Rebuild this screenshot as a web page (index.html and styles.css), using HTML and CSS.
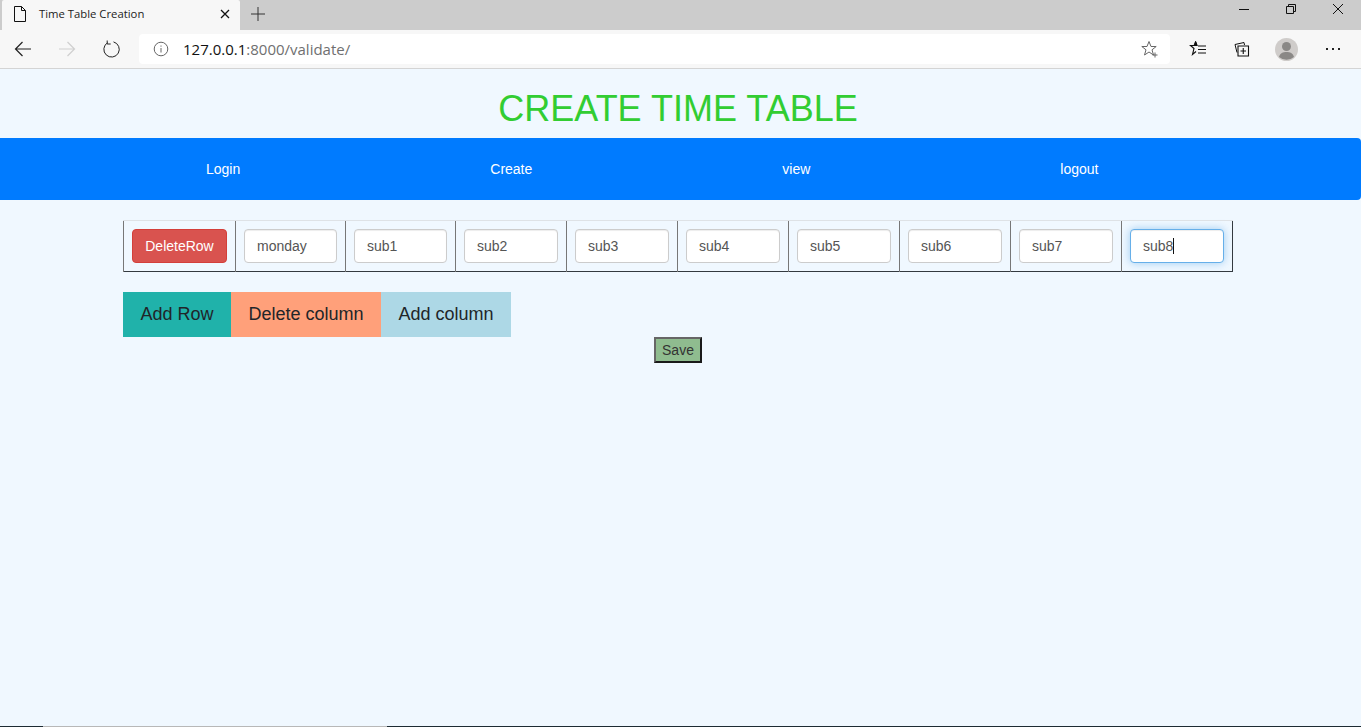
FILE: index.html
```html
<!DOCTYPE html>
<html>
<head>
<meta name="viewport" content="width=device-width, minimum-scale=1.0">
<title>Time Table Creation</title>
<link rel="stylesheet" href="styles.css">
</head>
<body>

<div class="tabstrip">
  <div class="tab">
    <svg class="tab-icon" width="16" height="18" viewBox="0 0 16 18"><path d="M2.500 1.500h7l4 4v11h-11zM9.500 1.500v4h4" fill="none" stroke="#111" stroke-width="1"/></svg>
    <span class="tab-title">Time Table Creation</span>
    <svg class="tab-close" width="10" height="10" viewBox="0 0 10 10"><path d="M1 1l8 8M9 1l-8 8" stroke="#111" stroke-width="1.300"/></svg>
  </div>
  <svg class="new-tab" width="14" height="14" viewBox="0 0 14 14"><path d="M7 0v14M0 7h14" stroke="#333" stroke-width="1"/></svg>
  <div class="window-controls">
    <svg width="12" height="12" viewBox="0 0 12 12"><path d="M1 6.500h10" stroke="#111" stroke-width="1"/></svg>
    <svg width="12" height="12" viewBox="0 0 12 12"><path d="M1.500 3.500h7v7h-7zM3.500 3.500v-2h7v7h-2" fill="none" stroke="#111" stroke-width="1"/></svg>
    <svg width="12" height="12" viewBox="0 0 12 12"><path d="M1 1l10 10M11 1l-10 10" stroke="#111" stroke-width="1"/></svg>
  </div>
</div>

<div class="toolbar">
  <svg class="tool back" width="18" height="16" viewBox="0 0 18 16"><path d="M17 8H1.500M8.500 1l-7 7 7 7" fill="none" stroke="#222" stroke-width="1.200"/></svg>
  <svg class="tool forward" width="18" height="16" viewBox="0 0 18 16"><path d="M1 8h15.500M9.500 1l7 7-7 7" fill="none" stroke="#cfcfcf" stroke-width="1.200"/></svg>
  <svg class="tool reload" width="18" height="18" viewBox="0 0 18 18"><path d="M5.500 2.800A7.700 7.700 0 1 0 11.500 1.900M5.200 0.500v3.500h3.500" fill="none" stroke="#222" stroke-width="1"/></svg>
  <div class="address">
    <svg class="info" width="16" height="16" viewBox="0 0 16 16"><circle cx="8" cy="8" r="6.800" fill="none" stroke="#666" stroke-width="1"/><path d="M8 7v4.500M8 4.500v1.200" stroke="#666" stroke-width="1"/></svg>
    <span class="url"><span class="host">127.0.0.1</span>:8000/validate/</span>
    <svg class="fav-add" width="18" height="18" viewBox="0 0 18 18"><path d="M8 1.500l2 5h5.200l-4.200 3.300 1.500 5.200L8 12l-4.500 3 1.500-5.200L.8 6.500H6z" fill="none" stroke="#666" stroke-width="1"/><path d="M14 12.500v5M11.500 15h5" stroke="#666" stroke-width="1"/></svg>
  </div>
  <svg class="tool favourites" width="18" height="18" viewBox="0 0 18 18"><path d="M6.500 1.500l1.500 4h-6.500l3.500 3-1.500 6 3.500-3" fill="none" stroke="#111" stroke-width="1.100"/><path d="M6.500 1.500l-1.500 4h3zM9 6h8M9 9.500h8M9 13h8" fill="#111" stroke="#111" stroke-width="1"/></svg>
  <svg class="tool collections" width="16" height="16" viewBox="0 0 16 16"><path d="M1 3.500l9-2 .5 2.500M3 11.500l-2-8" fill="none" stroke="#111" stroke-width="1"/><path d="M4 5h10.500v10H4zM9.250 7v6M6.500 10h5.500" fill="none" stroke="#111" stroke-width="1.100"/></svg>
  <svg class="tool avatar" width="23" height="23" viewBox="0 0 23 23"><circle cx="11.500" cy="11.500" r="11.500" fill="#cfccca"/><circle cx="11.500" cy="8.500" r="4.500" fill="#8a8886"/><path d="M4 19c1-4 4-5 7.500-5s6.500 1 7.500 5a11.500 11.500 0 0 1-15 0z" fill="#8a8886"/></svg>
  <div class="more"><i></i><i></i><i></i></div>
</div>

<div class="page">
  <h1 class="title">CREATE TIME TABLE</h1>

  <nav class="menu">
    <a href="#">Login</a>
    <a href="#">Create</a>
    <a href="#">view</a>
    <a href="#">logout</a>
  </nav>

  <div class="content">
    <table class="timetable">
      <tr>
        <td class="cell-first"><button class="delete-row">DeleteRow</button></td>
        <td class="cell-narrow"><input class="field" value="monday"></td>
        <td class="cell-narrow"><input class="field" value="sub1"></td>
        <td><input class="field" value="sub2"></td>
        <td><input class="field" value="sub3"></td>
        <td><input class="field" value="sub4"></td>
        <td><input class="field" value="sub5"></td>
        <td><input class="field" value="sub6"></td>
        <td><input class="field" value="sub7"></td>
        <td><div class="field field-focus">sub8<span class="caret"></span></div></td>
      </tr>
    </table>

    <div class="actions">
      <button class="action add-row">Add Row</button>
      <button class="action delete-col">Delete column</button>
      <button class="action add-col">Add column</button>
    </div>
  </div>

  <div class="save-row"><button class="save">Save</button></div>
</div>

<div class="taskbar-edge">
  <div class="edge-dark edge-left"></div>
  <div class="edge-light"></div>
  <div class="edge-dark edge-right"></div>
</div>

</body>
</html>
```

FILE: styles.css
```css
* {
  box-sizing: border-box;
}

html, body {
  height: 100%;
}

body {
  margin: 0;
  overflow: hidden;
  display: flex;
  flex-direction: column;
  background-color: #f0f8ff;
  font-family: "Liberation Sans", Arial, sans-serif;
}

/* browser chrome */

.tabstrip {
  height: 30px;
  display: flex;
  align-items: center;
  background-color: #cccccc;
}

.tab {
  width: 238px;
  height: 30px;
  margin-left: 2px;
  padding: 0 0 3px 10px;
  display: flex;
  align-items: center;
  background-color: #f7f7f7;
  border-radius: 2px 2px 0 0;
}

.tab-title {
  margin-left: 11px;
  font-family: "Open Sans", sans-serif;
  font-size: 11.300px;
  color: #222;
  flex: 1;
}

.tab-close {
  margin-right: 10px;
}

.new-tab {
  margin-left: 11px;
  margin-top: -3px;
}

.window-controls {
  margin-left: auto;
  margin-top: -13px;
  margin-right: 17px;
  display: flex;
  gap: 35px;
}

.toolbar {
  height: 39px;
  display: flex;
  align-items: center;
  background-color: #f7f7f7;
  border-bottom: 1px solid #d4d4d4;
}

.tool {
  flex: none;
}

.back {
  margin-left: 14px;
}

.forward {
  margin-left: 26px;
}

.reload {
  margin-left: 26px;
}

.address {
  width: 1031px;
  height: 30px;
  margin-left: 19px;
  padding-left: 14px;
  display: flex;
  align-items: center;
  background-color: #fff;
  border-radius: 4px;
}

.url {
  margin-left: 14px;
  font-family: "Open Sans", sans-serif;
  font-size: 15px;
  color: #6f6f6f;
  flex: 1;
}

.host {
  color: #111;
}

.fav-add {
  margin-right: 11px;
}

.favourites {
  margin-left: 19px;
}

.collections {
  margin-left: 27px;
}

.avatar {
  margin-left: 25px;
}

.more {
  margin-left: 28px;
  display: flex;
  gap: 4px;
}

.more i {
  width: 2px;
  height: 2px;
  background-color: #222;
}

/* page */

.page {
  flex: 1;
}

.title {
  margin: 0;
  padding: 19px 5px 8px 0;
  height: 69px;
  text-align: center;
  font-size: 36px;
  font-weight: 400;
  line-height: 41px;
  color: #32cd32;
}

.menu {
  height: 62px;
  padding-left: 206px;
  display: flex;
  align-items: center;
  gap: 250px;
  background-color: #007bff;
  border-radius: 0 4px 4px 0;
}

.menu a {
  font-size: 14px;
  color: #fff;
  text-decoration: none;
}

.content {
  padding: 20px 0 0 123px;
}

.timetable {
  width: 1109px;
  height: 52px;
  table-layout: fixed;
  border-collapse: collapse;
  border: 1px solid #343a40;
  border-top: 0;
}

.timetable td {
  width: 111px;
  padding: 8px;
  border-left: 1px solid #777;
  border-top: 1px solid #dee2e6;
  vertical-align: middle;
}

.timetable td.cell-first {
  width: 112px;
}

.timetable td.cell-narrow {
  width: 110px;
}

.delete-row {
  display: block;
  width: 95px;
  height: 34px;
  padding: 0;
  font-family: inherit;
  font-size: 14px;
  color: #fff;
  background-color: #d9534f;
  border: 1px solid #d43f3a;
  border-radius: 4px;
}

.field {
  display: block;
  width: 100%;
  height: 34px;
  padding: 6px 12px;
  font-family: inherit;
  font-size: 14px;
  line-height: 20px;
  color: #555;
  background-color: #fff;
  border: 1px solid #ccc;
  border-radius: 4px;
  box-shadow: inset 0 1px 1px rgba(0, 0, 0, 0.075);
}

.field-focus {
  border-color: #66afe9;
  box-shadow: inset 0 1px 1px rgba(0, 0, 0, 0.075), 0 0 8px rgba(102, 175, 233, 0.6);
}

.caret {
  display: inline-block;
  width: 1px;
  height: 16px;
  vertical-align: -3px;
  background-color: #111;
}

.actions {
  margin-top: 20px;
  display: flex;
}

.action {
  height: 45px;
  padding: 0;
  font-family: inherit;
  font-size: 18px;
  color: #212529;
  white-space: nowrap;
  border: 0;
}

.add-row {
  width: 108px;
  background-color: #20b2aa;
}

.delete-col {
  width: 150px;
  background-color: #ffa07a;
}

.add-col {
  width: 130px;
  background-color: #add8e6;
}

.save-row {
  padding-right: 5px;
  display: flex;
  justify-content: center;
}

.save {
  width: 48px;
  height: 26px;
  padding: 0;
  font-family: inherit;
  font-size: 14px;
  color: #333;
  background-color: #8fbc8f;
  border: 2px solid;
  border-color: #666 #1a1a1a #1a1a1a #666;
}

.taskbar-edge {
  height: 1px;
  display: flex;
}

.edge-dark {
  background-color: #1d2b33;
}

.edge-left {
  width: 43px;
}

.edge-light {
  width: 344px;
  background-color: #b8b8b8;
}

.edge-right {
  flex: 1;
}
```
